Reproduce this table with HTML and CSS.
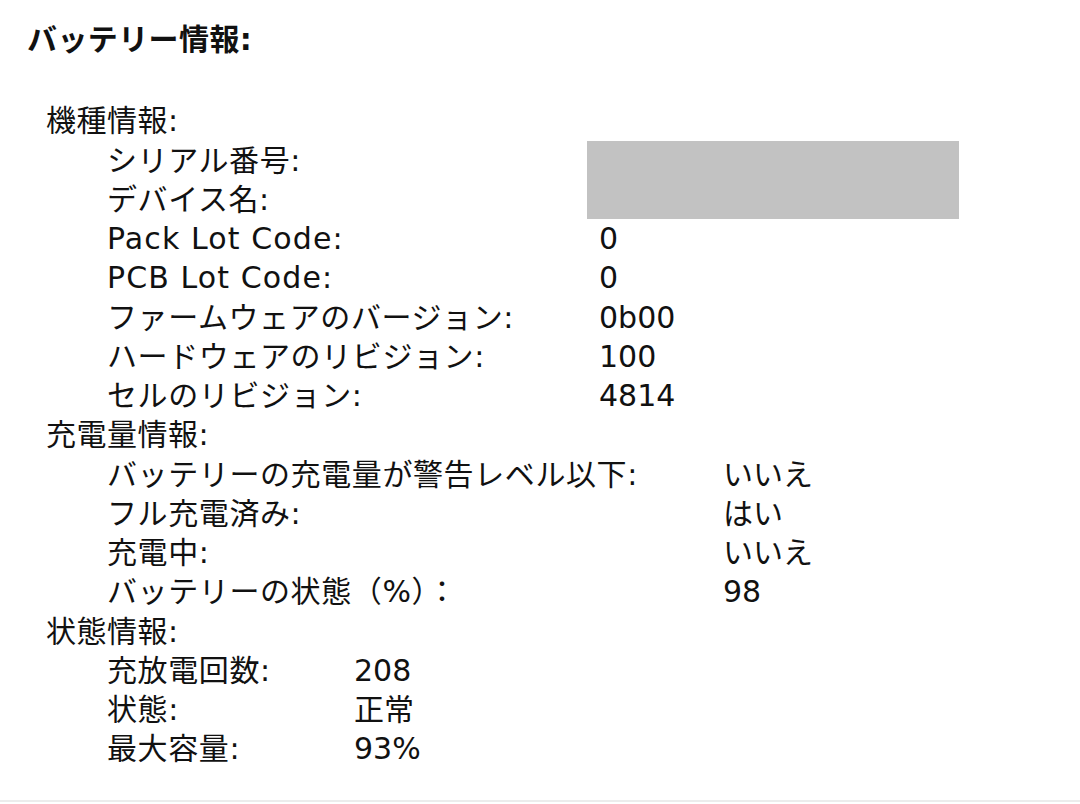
FILE: index.html
```html
<!DOCTYPE html>
<html lang="ja">
<head>
<meta charset="utf-8">
<title>バッテリー情報</title>
<link rel="stylesheet" href="styles.css">
</head>
<body>
<div class="page">
  <h1 class="title">バッテリー情報:</h1>

  <section class="group">
    <div class="group-head">機種情報:</div>
    <div class="rows rows-model">
      <div class="label">シリアル番号:</div>
      <div class="redact"></div>
      <div class="label">デバイス名:</div>
      <div class="label en">Pack Lot Code:</div>
      <div class="value">0</div>
      <div class="label en">PCB Lot Code:</div>
      <div class="value">0</div>
      <div class="label">ファームウェアのバージョン:</div>
      <div class="value">0b00</div>
      <div class="label">ハードウェアのリビジョン:</div>
      <div class="value">100</div>
      <div class="label">セルのリビジョン:</div>
      <div class="value">4814</div>
    </div>
  </section>

  <section class="group">
    <div class="group-head">充電量情報:</div>
    <div class="rows rows-charge">
      <div class="label">バッテリーの充電量が警告レベル以下:</div>
      <div class="value">いいえ</div>
      <div class="label">フル充電済み:</div>
      <div class="value">はい</div>
      <div class="label">充電中:</div>
      <div class="value">いいえ</div>
      <div class="label">バッテリーの状態（%）：</div>
      <div class="value">98</div>
    </div>
  </section>

  <section class="group">
    <div class="group-head">状態情報:</div>
    <div class="rows rows-health">
      <div class="label">充放電回数:</div>
      <div class="value">208</div>
      <div class="label">状態:</div>
      <div class="value">正常</div>
      <div class="label">最大容量:</div>
      <div class="value">93%</div>
    </div>
  </section>
</div>
</body>
</html>
```

FILE: styles.css
```css
html, body {
  margin: 0;
  padding: 0;
  background: #ffffff;
}

body {
  font-family: "DejaVu Sans", "Noto Sans CJK JP", sans-serif;
  font-size: 30px;
  color: #111111;
}

.page {
  height: 802px;
  box-sizing: border-box;
  padding: 20px 0 0 27px;
  border-bottom: 2px solid #ececec;
}

.title {
  margin: 0 0 42px 0;
  font-size: 30px;
  font-weight: bold;
  line-height: 39.25px;
  height: 39.25px;
  letter-spacing: 0.4px;
}

.group {
  padding-left: 19px;
}

.group-head {
  line-height: 39.25px;
  height: 39.25px;
  letter-spacing: 0.5px;
}

.rows {
  display: grid;
  grid-auto-rows: 39.25px;
  padding-left: 61px;
  line-height: 39.25px;
}

.rows-model {
  grid-template-columns: 492px auto;
}

.rows-charge {
  grid-template-columns: 616px auto;
}

.rows-health {
  grid-template-columns: 247px auto;
}

.label,
.value {
  white-space: nowrap;
}

.label {
  letter-spacing: 0.6px;
}

.label.en {
  letter-spacing: 1.1px;
}

.redact {
  grid-column: 2;
  grid-row: 1 / span 2;
  margin-left: -12px;
  width: 372px;
  background: #c2c2c2;
}

.rows-model .label:nth-of-type(2) {
  grid-column: 1;
  grid-row: 2;
}
```
